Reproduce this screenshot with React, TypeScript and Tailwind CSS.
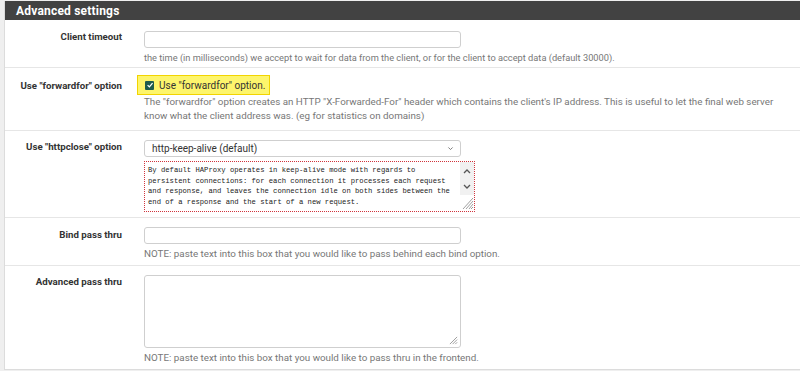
import React from 'react'

const font = { fontFamily: 'Roboto, "Liberation Sans", sans-serif' }

const Row = ({
  label,
  children,
  pad,
  labelPad,
  last
}: {
  label: string
  children: React.ReactNode
  pad: string
  labelPad: string
  last?: boolean
}) => (
  <div className={`flex ${last ? '' : 'border-b border-[#e6e6e6]'}`}>
    <div className={`w-[131px] shrink-0 pr-[14px] text-right text-[9.7px] font-bold text-[#333] leading-[14px] ${labelPad}`}>
      {label}
    </div>
    <div className={`flex-1 pl-[8px] ${pad}`}>{children}</div>
  </div>
)

const Help = ({ children, small }: { children: React.ReactNode; small?: boolean }) => (
  <p className={`mt-[3px] leading-[13px] text-[#777] ${small ? 'text-[9.25px]' : 'text-[9.8px]'}`}>{children}</p>
)

const TextInput = () => (
  <div className="h-[17px] w-[317px] rounded-[3px] border border-[#cfcfcf] bg-white" />
)

export default function App() {
  return (
    <div className="h-[371px] w-[800px] overflow-hidden bg-[#efefef] pl-[4px] pt-[1px]" style={font}>
      <div className="border-l border-b border-[#dcdcdc] bg-white">
        <div className="flex h-[19px] items-center bg-[#424242] pl-[11px] text-[12px] font-bold tracking-[0.2px] text-white">
          Advanced settings
        </div>

        <Row label="Client timeout" pad="pt-[11px] pb-[3px]" labelPad="pt-[10px]">
          <TextInput />
          <Help small>
            the time (in milliseconds) we accept to wait for data from the client, or for the client to accept data (default 30000).
          </Help>
        </Row>

        <Row label={'Use "forwardfor" option'} pad="pt-[7px] pb-[7px]" labelPad="pt-[11px]">
          <div className="-ml-[7px] flex h-[20px] w-fit items-center gap-[5px] border border-[#f2d400] bg-[#fdf56c] pl-[7px] pr-[4px]">
            <span className="flex h-[9px] w-[9px] items-center justify-center rounded-[1px] bg-[#1e5c4c]">
              <svg viewBox="0 0 10 10" className="h-[8px] w-[8px]">
                <path d="M2 5.2 L4.2 7.4 L8.2 2.6" fill="none" stroke="white" strokeWidth="1.6" />
              </svg>
            </span>
            <span className="text-[10px] text-[#333]">Use "forwardfor" option.</span>
          </div>
          <p className="text-[9.8px] leading-[14px] text-[#777]">
            The "forwardfor" option creates an HTTP "X-Forwarded-For" header which contains the client's IP address. This is useful to let the final web server
            <br />
            know what the client address was. (eg for statistics on domains)
          </p>
        </Row>

        <Row label={'Use "httpclose" option'} pad="pt-[9px] pb-[5px]" labelPad="pt-[9px]">
          <div className="flex h-[17px] w-[317px] items-center justify-between rounded-[3px] border border-[#cfcfcf] bg-white pl-[7px] pr-[6px]">
            <span className="text-[10px] text-[#333]">http-keep-alive (default)</span>
            <svg viewBox="0 0 10 10" className="h-[7px] w-[7px]">
              <path d="M2 3.5 L5 6.5 L8 3.5" fill="none" stroke="#666" strokeWidth="1.2" />
            </svg>
          </div>
          <div className="mt-[4px] flex h-[51px] w-[331px] border border-dotted border-[#d0343c]">
            <div
              className="flex-1 overflow-hidden whitespace-nowrap pl-[3px] pt-[3px] text-[7.2px] leading-[10.5px] text-[#222]"
              style={{ fontFamily: '"Liberation Mono", "Courier New", monospace' }}
            >
              By default HAProxy operates in keep-alive mode with regards to
              <br />
              persistent connections: for each connection it processes each request
              <br />
              and response, and leaves the connection idle on both sides between the
              <br />
              end of a response and the start of a new request.
            </div>
            <div className="relative w-[14px] shrink-0 bg-[#f1f1f1]">
              <svg viewBox="0 0 14 49" className="absolute left-0 top-0 h-[49px] w-[14px]">
                <path d="M4 11 L7 8 L10 11" fill="none" stroke="#555" strokeWidth="1.3" />
                <path d="M4 23 L7 26 L10 23" fill="none" stroke="#555" strokeWidth="1.3" />
                <rect x="0" y="33" width="14" height="16" fill="white" />
                <path d="M13 36 L3 47 M13 39 L6 47 M13 42 L9 47 M13 45 L11 47" stroke="#888" strokeWidth="0.8" />
              </svg>
            </div>
          </div>
        </Row>

        <Row label="Bind pass thru" pad="pt-[9px] pb-[5px]" labelPad="pt-[10px]">
          <TextInput />
          <Help>NOTE: paste text into this box that you would like to pass behind each bind option.</Help>
        </Row>

        <Row label="Advanced pass thru" pad="pt-[9px] pb-[5px]" labelPad="pt-[9px]" last>
          <div className="relative h-[73px] w-[317px] rounded-[3px] border border-[#cfcfcf] bg-white">
            <svg viewBox="0 0 10 10" className="absolute bottom-[2px] right-[2px] h-[9px] w-[9px]">
              <path d="M9 1 L1 9 M9 4 L4 9 M9 7 L7 9" stroke="#888" strokeWidth="0.9" />
            </svg>
          </div>
          <Help>NOTE: paste text into this box that you would like to pass thru in the frontend.</Help>
        </Row>
      </div>
    </div>
  )
}
